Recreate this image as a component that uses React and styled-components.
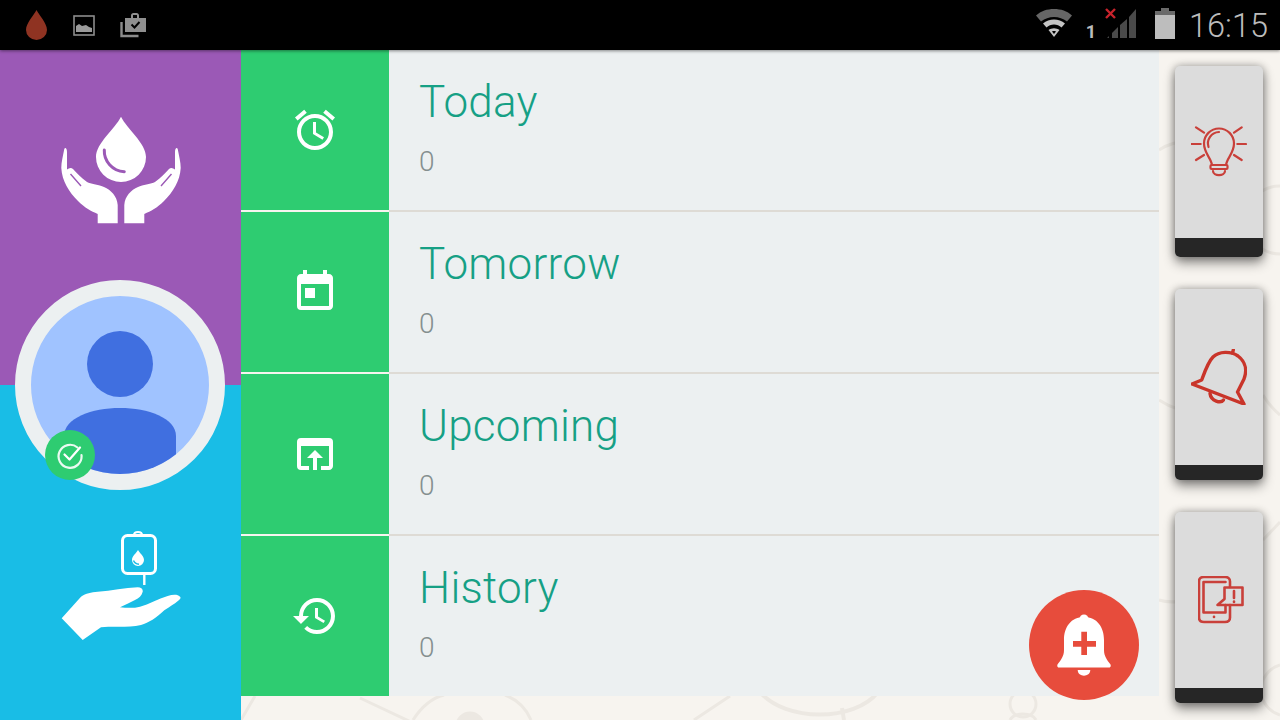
import React from 'react';
import styled, { createGlobalStyle } from 'styled-components';
import { MdAccessAlarm, MdHistory, MdOpenInBrowser, MdToday } from 'react-icons/md';

const GlobalStyle = createGlobalStyle`
  html, body {
    margin: 0;
    padding: 0;
    background: #f7f4ef;
    font-family: Roboto, "Liberation Sans", sans-serif;
  }
`;

const Screen = styled.div`
  position: relative;
  width: 1280px;
  height: 720px;
  overflow: hidden;
  display: flex;
  flex-direction: column;
  background: #f7f4ef;
`;

const Doodles = styled.svg`
  position: absolute;
  left: 0;
  top: 0;
`;

const StatusBar = styled.div`
  position: relative;
  z-index: 3;
  flex: none;
  height: 50px;
  background: #000;
  box-shadow: 0 1px 3px rgba(0, 0, 0, 0.45);
  display: flex;
  align-items: center;
  justify-content: space-between;
  padding: 0 12px 0 26px;
`;

const StatusGroup = styled.div`
  display: flex;
  align-items: center;
`;

const StatusIcon = styled.svg`
  display: block;
  flex: none;
  margin-left: ${(p) => p.$gap || 0}px;
  margin-bottom: ${(p) => p.$lift || 0}px;
`;

const Clock = styled.div`
  margin-left: 14px;
  padding-top: 2px;
  font-size: 32.5px;
  font-weight: 300;
  line-height: 48px;
  color: #bcbcbc;
`;

const SimNumber = styled.span`
  margin: 13px 0 0 14px;
  font-size: 18px;
  font-weight: 700;
  line-height: 18px;
  color: #bcbcbc;
`;

const Main = styled.div`
  position: relative;
  flex: 1;
  display: flex;
  min-height: 0;
`;

const Sidebar = styled.div`
  position: relative;
  flex: none;
  width: 241px;
  display: flex;
  flex-direction: column;
`;

const SidePanel = styled.div`
  flex: none;
  height: ${(p) => p.$height}px;
  box-sizing: border-box;
  padding-top: ${(p) => p.$top}px;
  background: ${(p) => p.$color};
  display: flex;
  justify-content: center;
  align-items: flex-start;
`;

const Avatar = styled.div`
  position: absolute;
  left: 15px;
  top: 230px;
  width: 178px;
  height: 178px;
  border: 16px solid #ecf0f1;
  border-radius: 50%;
  background: #a0c3ff;
`;

const Badge = styled.div`
  position: absolute;
  left: 14px;
  top: 134px;
  width: 50px;
  height: 50px;
  border-radius: 50%;
  background: #2ecc71;
  display: flex;
  align-items: center;
  justify-content: center;
`;

const List = styled.div`
  position: relative;
  flex: none;
  width: 918px;
  display: flex;
  flex-direction: column;
  gap: 2px;
`;

const Row = styled.div`
  flex: none;
  height: 160px;
  display: flex;
  background: #ecf0f1;
`;

const RowIcon = styled.div`
  flex: none;
  width: 148px;
  background: #2ecc71;
  color: #fff;
  display: flex;
  align-items: center;
  justify-content: center;
  font-size: 48px;
`;

const RowBody = styled.div`
  flex: 1;
  padding: 25px 0 0 30px;
  box-shadow: ${(p) => (p.$divided ? '0 2px 0 #dedbd5' : 'none')};
`;

const RowTitle = styled.div`
  font-size: 44px;
  font-weight: 300;
  line-height: 54px;
  letter-spacing: 0.25px;
  color: #16a085;
`;

const RowCount = styled.div`
  margin-top: 16px;
  font-size: 28px;
  font-weight: 300;
  line-height: 34px;
  color: #858f8f;
`;

const AddButton = styled.div`
  position: absolute;
  left: 788px;
  top: 540px;
  width: 110px;
  height: 110px;
  border-radius: 50%;
  background: #e74c3c;
  display: flex;
  align-items: center;
  justify-content: center;
`;

const Shortcuts = styled.div`
  position: relative;
  flex: 1;
  display: flex;
  flex-direction: column;
  gap: 32px;
  padding: 16px 17px 0 16px;
`;

const ShortcutCard = styled.div`
  flex: none;
  height: 191px;
  display: flex;
  flex-direction: column;
  overflow: hidden;
  border-radius: 5px;
  background: #dcdcdc;
  box-shadow: 0 6px 12px rgba(0, 0, 0, 0.42), 0 0 8px rgba(0, 0, 0, 0.3);
`;

const ShortcutBody = styled.div`
  flex: 1;
  display: flex;
  align-items: center;
  justify-content: center;
  padding-left: ${(p) => p.$shift || 0}px;
`;

const ShortcutFoot = styled.div`
  flex: none;
  height: ${(p) => p.$height}px;
  background: #262626;
`;

const BloodDrop = () => (
  <StatusIcon width="21" height="30" viewBox="0 0 21 30">
    <path d="M10.5 0C8 5 0 13 0 20a10.5 10 0 0 0 21 0C21 13 13 5 10.5 0Z" fill="#8f3322" />
  </StatusIcon>
);

const ImageNote = () => (
  <StatusIcon $gap={26} width="22" height="21" viewBox="0 0 22 21">
    <rect x="1" y="1" width="20" height="19" fill="none" stroke="#8c8c8c" strokeWidth="1.6" />
    <path d="M3 17V11l3-2 3 2 4-1 3 2 3 1v4Z" fill="#9a9a9a" />
  </StatusIcon>
);

const CaseNote = () => (
  <StatusIcon $gap={25} width="26" height="25" viewBox="0 0 26 25">
    <path d="M1.5 9v14h17" fill="none" stroke="#8c8c8c" strokeWidth="2.4" />
    <path d="M5 5h6V2.5C11 1 12 0 13.5 0h3C18 0 19 1 19 2.5V5h7v14H5Z" fill="#8f8f8f" />
    <rect x="13" y="2" width="4" height="3" fill="#000" />
    <path d="m11.5 11.500 3 3 5-5.500" fill="none" stroke="#000" strokeWidth="2" />
  </StatusIcon>
);

const Wifi = () => (
  <StatusIcon $lift={4} width="36" height="30" viewBox="0 0 36 30">
    <path d="M0 7.5C5 3 11 1 18 1s13 2 18 6.5l-5 6C27 10.500 23 9 18 9s-9 1.500-13 4.500Z" fill="#666" />
    <path d="M7 15.5c3-2.500 7-4 11-4s8 1.500 11 4l-3.500 4c-2-1.800-4.700-3-7.500-3s-5.500 1.200-7.500 3Z" fill="#c4c4c4" />
    <path d="M12.5 22c1.500-1 3.500-1.800 5.500-1.800s4 .8 5.500 1.800L18 29Zm3.500 1.500 2 2.500 2-2.500c-1.300-.6-2.700-.6-4 0Z" fill="#c4c4c4" fillRule="evenodd" />
  </StatusIcon>
);

const Signal = () => (
  <StatusIcon $gap={9} $lift={3} width="33" height="32" viewBox="0 0 33 32">
    <path d="M2 30h2v-2l-2 2Z" fill="#444" />
    <path d="M7 30h6V19l-6 6Z" fill="#4a4a4a" />
    <path d="M15 30h7V11l-7 6Z" fill="#4a4a4a" />
    <path d="M24 30h7V1l-7 8Z" fill="#4a4a4a" />
    <path d="m1 1 9 9m0-9-9 9" stroke="#c8232c" strokeWidth="2.4" fill="none" />
  </StatusIcon>
);

const Battery = () => (
  <StatusIcon $gap={17} $lift={4} width="20" height="31" viewBox="0 0 20 31">
    <rect x="6" y="0" width="8" height="3" fill="#6a6a6a" />
    <rect x="0" y="3" width="20" height="5" fill="#6a6a6a" />
    <rect x="0" y="7" width="20" height="24" fill="#bdbdbd" />
  </StatusIcon>
);

const HandsDrop = () => (
  <svg width="120" height="108" viewBox="0 0 120 108">
    <path d="M60 .7C54 13 35 27 35 41a25 25 0 0 0 50 0C85 27 66 13 60 .7Z" fill="#fff" />
    <path d="M43.3 34c-.5 11 8 21 20 21.700" fill="none" stroke="#9b59b6" strokeWidth="3" strokeLinecap="round" />
    <path
      fill="#fff"
      d="M3.3 33C2 40 .3 46 .3 52 1 65 8 76 17 85c7 7 13 10 19.700 13v9.300h20V89C56 80 50 74 43 71c-7-3-13-3-17-5-6-4-10-9-14-13-2-2-4-1-6 .5L6 36c0-4-2-5-2.700-3Z"
    />
    <path
      fill="#fff"
      d="M116.700 33c1.300 7 3 13 3 19-.7 13-7.700 24-16.700 33-7 7-13 10-19.700 13v9.300h-20V89c.7-9 6.700-15 13.700-18 7-3 13-3 17-5 6-4 10-9 14-13 2-2 4-1 6 .5l0-17.500c0-4 2-5 2.700-3Z"
    />
    <path d="M9.5 58 20 70M110.500 58 100 70" fill="none" stroke="#9b59b6" strokeWidth="1.4" />
  </svg>
);

const HandBag = () => (
  <svg width="120" height="110" viewBox="0 0 120 110">
    <rect x="61.5" y="5.500" width="33" height="38" rx="5" fill="none" stroke="#fff" strokeWidth="3" />
    <path d="M73 5c0-4 8-4 8 0" fill="none" stroke="#fff" strokeWidth="2" />
    <path d="M83.3 44v11" stroke="#fff" strokeWidth="2.4" />
    <path d="M77 20c-2 3.500-6 6-6 10a6 6 0 0 0 12 0c0-4-4-6.500-6-10Z" fill="#fff" />
    <path d="M72.5 30.500c1 2.500 3 3.500 5.500 3.800" fill="none" stroke="#19bde6" strokeWidth="1.4" />
    <path
      fill="#fff"
      d="M.7 88.300 20 66.700c5-3.500 10-4.500 16.700-5 14-1 27-3.800 40-4.400 3.500 0 5.500 2 5 4.400-1 4-3.700 6.300-7.700 8.300-5 2.500-10 5-15 7.300 7 .7 14 1 20-.6 9-2.500 18-7.700 27.700-10.700 5-1.500 10-2 12.600 1 1 2-1 3.800-16 13.300C95 88 88 92.700 80 95c-12 3-27 1-40 2.300L21.700 110Z"
    />
  </svg>
);

const PersonArt = () => (
  <svg width="178" height="178" viewBox="0 0 178 178">
    <defs>
      <clipPath id="portrait">
        <circle cx="89" cy="89" r="89" />
      </clipPath>
    </defs>
    <g clipPath="url(#portrait)" fill="#406fe0">
      <circle cx="89" cy="68" r="33" />
      <path d="M33 178V140c0-18 28-28 56-28s56 10 56 28v38Z" />
    </g>
  </svg>
);

const CheckRing = () => (
  <svg width="28" height="28" viewBox="0 0 28 28" fill="none" stroke="#fff" strokeWidth="2.2" strokeLinecap="round" strokeLinejoin="round">
    <path d="M21.5 6.500A11.500 11.500 0 1 0 25.500 14" opacity="0.9" />
    <path d="m8.5 13.500 5 5L24 6.500" />
  </svg>
);

const BulbIcon = () => (
  <svg width="56" height="52" viewBox="0 0 56 52" fill="none" stroke="#c9403a" strokeWidth="2.2" strokeLinecap="round" strokeLinejoin="round">
    <path d="M21 39c-1-7-8-12-8-21.500a15 15 0 0 1 30 0C43 27 36 32 35 39" />
    <path d="M17.5 21A11.500 11.500 0 0 1 28 6" />
    <rect x="19.5" y="39" width="17" height="4" rx="1" />
    <path d="M22 45c0 5.500 12 5.500 12 0" />
    <path d="m5 1.300 8 5.400M50.700 1.300l-7.700 5.400M.7 18h9M46.300 18H55M5 34l8-5M50.700 34 43 29" />
  </svg>
);

const TiltedBell = () => (
  <svg width="56" height="56" viewBox="0 0 56 56" fill="none" stroke="#c9352a" strokeWidth="3.4" strokeLinejoin="round" strokeLinecap="round">
    <path d="M1 35 10.700 31C14 22 17 13 22 8 28 2 40 2 47 7c8 6 9 15 6 23l-6.500 13L53 55Z" />
    <path d="M19 44.500c1 8 11 10 13.500 6.500" />
    <path d="m42.300 1-.8 3" />
  </svg>
);

const PhoneAlert = () => (
  <svg width="46" height="48" viewBox="0 0 46 48" fill="none" stroke="#c9403a" strokeWidth="2.6" strokeLinecap="round" strokeLinejoin="round">
    <path d="M32 11V5.500C32 2.500 30 1 27 1H6C2.500 1 1 2.500 1 5.500v36C1 44.500 2.500 46 6 46h21c3 0 5-1.500 5-4.500V29" />
    <path d="M5.5 36.500V6H27.500M5.500 36.500H27.500V29" />
    <path d="M26.5 11.500H44.500V29H19.500L26.500 23Z" />
    <path d="M36 15v7" />
    <path d="M36 25.500v.4" />
    <path d="M16 40.700v.2" />
  </svg>
);

const AddBell = () => (
  <svg width="54" height="62" viewBox="0 0 54 62">
    <circle cx="27" cy="5" r="4.5" fill="#fff" />
    <path d="M27 3C14 3 7 13 7 26v10c0 6-3 10-6.500 14.500-.6 1.500 0 3 1.500 3h50c1.500 0 2.100-1.500 1.500-3C50 46 47 42 47 36V26C47 13 40 3 27 3Z" fill="#fff" />
    <path d="M20.7 56h12.600c0 7.500-12.600 7.500-12.600 0Z" fill="#fff" />
    <path d="M24.3 17.700H30V27h9v5.700h-9V41h-5.700v-8.300H16V27h8.300Z" fill="#e74c3c" />
  </svg>
);

const rows = [
  { title: 'Today', Icon: MdAccessAlarm },
  { title: 'Tomorrow', Icon: MdToday },
  { title: 'Upcoming', Icon: MdOpenInBrowser },
  { title: 'History', Icon: MdHistory },
];

const shortcuts = [
  { name: 'tips', Icon: BulbIcon, foot: 19 },
  { name: 'alerts', Icon: TiltedBell, foot: 15 },
  { name: 'report', Icon: PhoneAlert, foot: 15, shift: 3 },
];

const App = () => (
  <Screen>
    <GlobalStyle />
    <Doodles width="1280" height="720" viewBox="0 0 1280 720" fill="none" stroke="#ece8e2" strokeWidth="3">
      <path d="M413 720C422 706 432 698 444 695M505 695C518 700 526 708 531 720" />
      <circle cx="470" cy="726" r="13" fill="#ece8e2" />
      <path d="M255 696 241 720M360 698l51 24M694 720l36-24" />
      <path d="M760 692C785 722 855 722 878 692M842 708l2 12" strokeWidth="4" />
      <circle cx="1023" cy="704" r="13" />
      <path d="M1010 720c2-4 6-6 13-6s11 2 13 6" />
      <path d="M1159 150c12-8 24-10 40-8M1159 400c12 8 24 12 40 12M1263 395c6 10 12 16 17 20M1159 600c12 4 24 2 40-4" />
      <path d="M1280 186a34 34 0 0 0 0 68M1280 665a26 26 0 0 0 0 50M1263 540l17-18" />
    </Doodles>
    <StatusBar>
      <StatusGroup>
        <BloodDrop />
        <ImageNote />
        <CaseNote />
      </StatusGroup>
      <StatusGroup>
        <Wifi />
        <SimNumber>1</SimNumber>
        <Signal />
        <Battery />
        <Clock>16:15</Clock>
      </StatusGroup>
    </StatusBar>
    <Main>
      <Sidebar>
        <SidePanel $height={335} $top={66} $color="#9b59b6">
          <HandsDrop />
        </SidePanel>
        <SidePanel $height={335} $top={145} $color="#19bde6">
          <HandBag />
        </SidePanel>
        <Avatar>
          <PersonArt />
          <Badge>
            <CheckRing />
          </Badge>
        </Avatar>
      </Sidebar>
      <List>
        {rows.map(({ title, Icon }, i) => (
          <Row key={title}>
            <RowIcon>
              <Icon />
            </RowIcon>
            <RowBody $divided={i < rows.length - 1}>
              <RowTitle>{title}</RowTitle>
              <RowCount>0</RowCount>
            </RowBody>
          </Row>
        ))}
        <AddButton>
          <AddBell />
        </AddButton>
      </List>
      <Shortcuts>
        {shortcuts.map(({ name, Icon, foot, shift }) => (
          <ShortcutCard key={name}>
            <ShortcutBody $shift={shift}>
              <Icon />
            </ShortcutBody>
            <ShortcutFoot $height={foot} />
          </ShortcutCard>
        ))}
      </Shortcuts>
    </Main>
  </Screen>
);

export default App;
